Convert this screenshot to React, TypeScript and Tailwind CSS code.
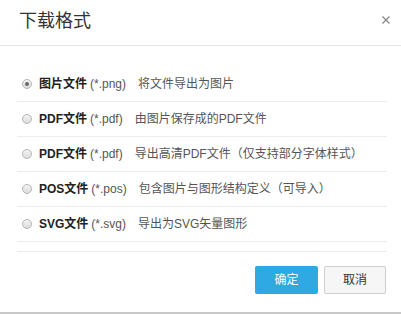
import React, { useState } from 'react';

const formats = [
  { name: '图片文件', ext: '(*.png)', desc: '将文件导出为图片' },
  { name: 'PDF文件', ext: '(*.pdf)', desc: '由图片保存成的PDF文件' },
  { name: 'PDF文件', ext: '(*.pdf)', desc: '导出高清PDF文件（仅支持部分字体样式）' },
  { name: 'POS文件', ext: '(*.pos)', desc: '包含图片与图形结构定义（可导入）' },
  { name: 'SVG文件', ext: '(*.svg)', desc: '导出为SVG矢量图形' },
];

const font = { fontFamily: '"Liberation Sans", "Noto Sans CJK SC", sans-serif' };

const App: React.FC = () => {
  const [selected, setSelected] = useState(0);

  return (
    <div className="w-[401px] h-[314px] bg-white overflow-hidden flex flex-col" style={font}>
      <div className="w-full h-[312px] flex flex-col border-b-2 border-[#c8c8c8] box-content">
        {/* Header */}
        <div className="h-[46px] flex items-center justify-between pl-[19px] pr-[9px] border-b border-[#e5e5e5] shrink-0">
          <h1 className="text-[18px] text-[#333] leading-none -mt-[3px]">下载格式</h1>
          <button className="text-[#999] leading-none -mt-[6px] w-[12px] h-[12px] flex items-center justify-center">
            <svg width="8" height="8" viewBox="0 0 8 8">
              <path d="M0.5 0.5L7.5 7.5M7.5 0.5L0.5 7.5" stroke="#8a8a8a" strokeWidth="1.4" />
            </svg>
          </button>
        </div>

        {/* List */}
        <div className="pt-[21px] pl-[17px] pr-[14px]">
          {formats.map((f, i) => (
            <div
              key={i}
              onClick={() => setSelected(i)}
              className="h-[35px] border-b border-[#ececec] flex items-center cursor-pointer text-[12px]"
            >
              <span className="ml-[5px] w-[10px] h-[10px] rounded-full border border-[#b5b5b5] bg-gradient-to-b from-[#f4f4f4] to-[#dcdcdc] flex items-center justify-center mr-[7px]">
                {selected === i && <span className="w-[4px] h-[4px] rounded-full bg-[#666]" />}
              </span>
              <span className="font-bold text-[#222]">{f.name}</span>
              <span className="text-[#555] ml-[3px]">{f.ext}</span>
              <span className="text-[#555] ml-[12px]">{f.desc}</span>
            </div>
          ))}
          <div className="h-[10px] border-b border-[#ececec]" />
        </div>

        {/* Footer */}
        <div className="flex justify-end gap-[6px] pt-[14px] pr-[15px]">
          <button className="w-[63px] h-[28px] rounded-[2px] bg-[#2fa9e1] text-white text-[12px]">确定</button>
          <button className="w-[62px] h-[28px] rounded-[2px] bg-[#f6f6f6] border border-[#cfcfcf] text-[#333] text-[12px]">取消</button>
        </div>
      </div>
    </div>
  );
};

export default App;
